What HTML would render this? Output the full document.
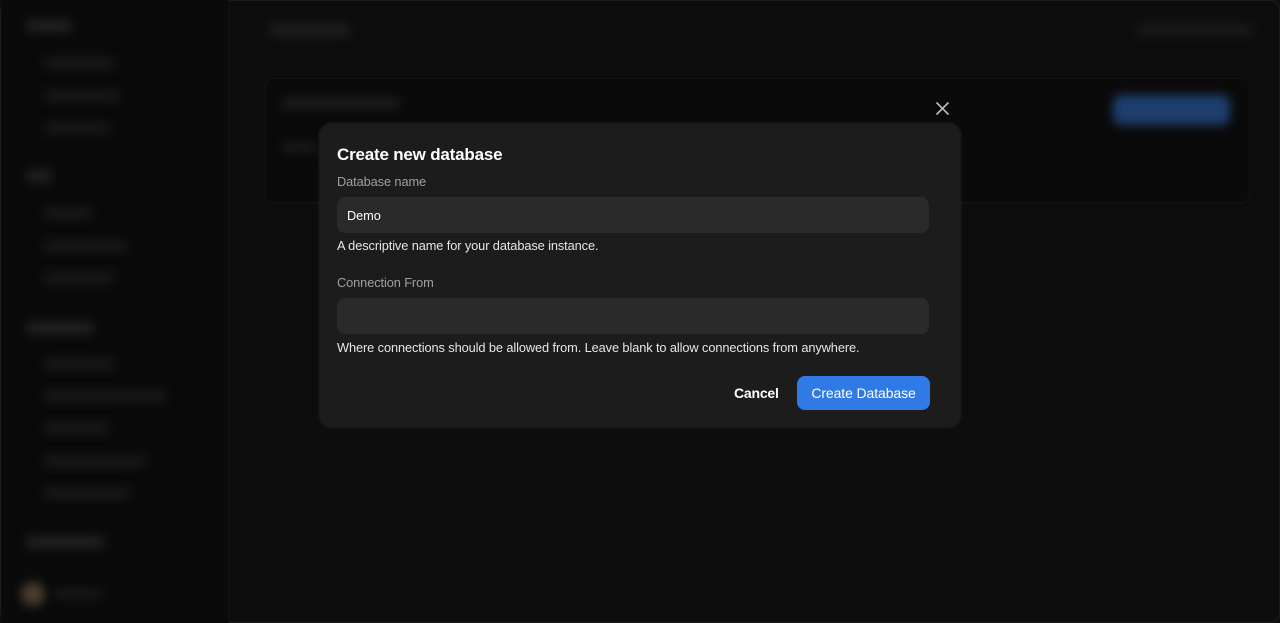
<!DOCTYPE html>
<html><head><meta charset="utf-8"><style>
*{box-sizing:border-box;margin:0;padding:0}
body{width:1280px;height:623px;background:#0e0e0e;font-family:"Liberation Sans",sans-serif;overflow:hidden;position:relative}
.frame{position:absolute;inset:0;border:1px solid #1c1c1c;border-radius:10px;background:#0d0d0d}
.side{position:absolute;left:1px;top:0;width:228px;height:623px;background:#0a0a0a;border-right:1px solid #111}
.b{position:absolute;background:#1f1f1f;border-radius:4px;filter:blur(5px)}
.side .b{background:#181818}
.modal{position:absolute;left:320px;top:124px;width:640px;height:303px;background:#1c1c1c;border-radius:12px;box-shadow:0 0 0 2px #161616}
.t{position:absolute;left:17px;color:#fff}
.s{font-size:12.8px;letter-spacing:-0.1px}
.in{position:absolute;left:17px;width:592px;height:36px;background:#2a2a2a;border-radius:8px}
</style></head><body>
<div class="frame"></div>
<div class="side">
<div class="b" style="left:25px;top:20px;width:45px;height:12px;background:#222"></div>
<div class="b" style="left:43px;top:57px;width:70px;height:12px"></div>
<div class="b" style="left:43px;top:90px;width:75px;height:12px"></div>
<div class="b" style="left:43px;top:122px;width:65px;height:12px"></div>
<div class="b" style="left:25px;top:170px;width:25px;height:12px;background:#222"></div>
<div class="b" style="left:43px;top:207px;width:48px;height:12px"></div>
<div class="b" style="left:43px;top:240px;width:82px;height:12px"></div>
<div class="b" style="left:43px;top:272px;width:70px;height:12px"></div>
<div class="b" style="left:25px;top:322px;width:68px;height:12px;background:#222"></div>
<div class="b" style="left:43px;top:358px;width:70px;height:12px"></div>
<div class="b" style="left:43px;top:390px;width:122px;height:12px"></div>
<div class="b" style="left:43px;top:422px;width:65px;height:12px"></div>
<div class="b" style="left:43px;top:455px;width:102px;height:12px"></div>
<div class="b" style="left:43px;top:487px;width:85px;height:12px"></div>
<div class="b" style="left:25px;top:536px;width:78px;height:12px;background:#222"></div>
<div class="b" style="left:20px;top:582px;width:24px;height:24px;border-radius:12px;background:#4a3e30"></div>
<div class="b" style="left:52px;top:589px;width:50px;height:10px"></div>
</div>
<div class="b" style="left:270px;top:24px;width:80px;height:12px"></div>
<div class="b" style="left:1137px;top:24px;width:115px;height:12px;background:#1a1a1a"></div>
<div style="position:absolute;left:265px;top:78px;width:985px;height:125px;background:#0a0a0a;border:1px solid #141414;border-radius:8px"></div>
<div class="b" style="left:282px;top:97px;width:118px;height:12px;background:#1c1c1c"></div>
<div class="b" style="left:282px;top:142px;width:35px;height:10px;background:#1a1a1a"></div>
<div class="b" style="left:1113px;top:95px;width:117px;height:30px;background:#1e3f6e;border-radius:8px"></div>
<svg style="position:absolute;left:935px;top:101px" width="15" height="15" viewBox="0 0 15 15"><path d="M1.5 1.5L13.5 13.5M13.5 1.5L1.5 13.5" stroke="#bbb" stroke-width="1.6"/></svg>
<div class="modal">
<div class="t" style="top:21px;font-size:17px;font-weight:bold;letter-spacing:-0.2px">Create new database</div>
<div class="t s" style="top:50px;color:#a0a0a0">Database name</div>
<div class="in" style="top:73px"><span class="s" style="position:absolute;left:10px;top:11px;color:#fff">Demo</span></div>
<div class="t s" style="top:114px;color:#e6e6e6">A descriptive name for your database instance.</div>
<div class="t s" style="top:151px;color:#a0a0a0">Connection From</div>
<div class="in" style="top:174px"></div>
<div class="t s" style="top:216px;color:#e6e6e6">Where connections should be allowed from. Leave blank to allow connections from anywhere.</div>
<div style="position:absolute;left:414px;top:261px;font-size:14px;color:#fff;font-weight:bold;letter-spacing:-0.2px">Cancel</div>
<div style="position:absolute;left:477px;top:252px;width:133px;height:34px;background:#2f7ae5;border-radius:8px;color:#fff;font-size:14px;text-align:center;line-height:34px;letter-spacing:-0.1px">Create Database</div>
</div>
</body></html>
